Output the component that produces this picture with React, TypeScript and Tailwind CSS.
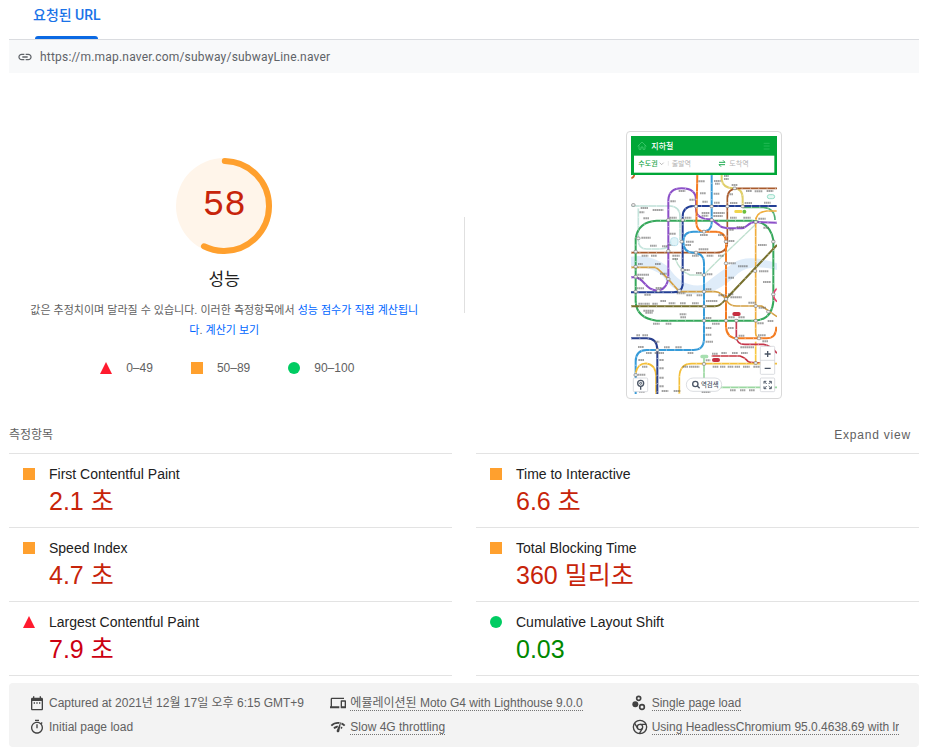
import type { ReactNode } from "react";

type Rating = "fail" | "average" | "pass";

const LATIN = "font-['Liberation_Sans','Noto_Sans_CJK_KR',sans-serif]";

function Marker({ rating }: { rating: Rating }) {
  return (
    <svg viewBox="0 0 12 12" className="size-3 shrink-0" aria-hidden="true">
      {rating === "fail" && <path d="M6 0 12 12H0Z" fill="#ff1a2e" />}
      {rating === "average" && <rect width="12" height="12" fill="#ffa02e" />}
      {rating === "pass" && <circle cx="6" cy="6" r="6" fill="#00cc62" />}
    </svg>
  );
}

function Gauge() {
  const radius = 45;
  const length = 2 * Math.PI * radius;
  return (
    <div className="grid size-24 place-items-center">
      <svg viewBox="0 0 96 96" className="col-start-1 row-start-1 size-24" aria-hidden="true">
        <circle cx="48" cy="48" r="48" fill="#fff5ea" />
        <circle
          cx="48"
          cy="48"
          r={radius}
          fill="none"
          stroke="#ffa02e"
          strokeWidth="6"
          strokeLinecap="round"
          strokeDasharray={`${0.57 * length} ${length}`}
          transform="rotate(-89 48 48)"
        />
      </svg>
      <span className="col-start-1 row-start-1 font-['Liberation_Mono',monospace] text-4xl text-[#c7240a]">58</span>
    </div>
  );
}

const LINES: { d: string; c: string; w?: number }[] = [
  { d: "M33 243H150Q180 245 180 275V345", c: "#bfe0d8", w: 5 },
  { d: "M55 250V345Q55 372 80 372H120Q148 372 150 350", c: "#c4e4dc", w: 5 },
  { d: "M405 290V300L290 410Q250 450 252 450H210Q180 440 165 400", c: "#bfe0cf", w: 4 },
  { d: "M407 715V650", c: "#f8c840" },
  { d: "M305 148V165Q310 190 340 190Q368 190 368 220V245", c: "#e0cf6a", w: 6 },
  { d: "M368 247H430Q465 250 465 285", c: "#4fae72", w: 5 },
  { d: "M471 258H440Q407 262 407 290V625Q407 640 425 640", c: "#f0ad3c", w: 5 },
  { d: "M33 383H290Q322 383 322 350V220Q322 190 355 190H471", c: "#a85a2c", w: 5 },
  { d: "M47 340Q55 290 110 287H395Q450 290 460 345V530Q455 587 400 587H110Q50 580 47 530Z", c: "#36a85b", w: 6 },
  { d: "M33 457H45C75 460 75 497 115 497Q145 490 145 450V225Q147 190 185 190Q228 190 228 225V255Q230 283 275 283L305 306Q315 310 340 310H365C380 310 385 291 405 291L471 293", c: "#8c50c8", w: 6 },
  { d: "M471 243H220Q188 245 188 275V480Q185 502 160 502H33", c: "#233f95", w: 6 },
  { d: "M275 148V295Q275 320 245 320H220Q190 320 190 350Q190 383 222 383Q252 385 252 415V645Q250 675 220 675H80Q47 675 47 710V807", c: "#369bd9", w: 6 },
  { d: "M232 148L229 295Q230 320 255 320H288Q318 322 318 352V605Q320 640 352 640H440Q469 640 469 605", c: "#f47b20", w: 6 },
  { d: "M33 427H105Q115 427 178 500H285Q305 500 322 530Q330 543 350 543H425L471 575", c: "#d4a043", w: 5 },
  { d: "M33 544H285Q300 544 315 525L471 360", c: "#77702d", w: 6 },
  { d: "M349 587V635Q350 658 375 658H430Q450 660 471 685", c: "#c6384d", w: 5 },
  { d: "M275 693H360Q375 697 385 710Q390 714 430 714", c: "#c6343f", w: 5 },
  { d: "M252 690V787H471", c: "#9bd8a1", w: 5 },
  { d: "M178 807V755Q180 716 215 716H471", c: "#f4bf39", w: 5 },
  { d: "M47 745Q52 715 78 715Q108 718 108 755V807", c: "#f4bf39", w: 5 },
  { d: "M33 640H80Q112 640 112 675V807", c: "#293f8d", w: 6 },
  { d: "M33 160Q43 158 43 148", c: "#d0622c", w: 5 },
  { d: "M471 490Q450 510 471 530", c: "#e74475", w: 5 },
];

const STATIONS = [
  [145, 285], [188, 285], [228, 244], [275, 244], [322, 244], [344, 190], [368, 244], [40, 240],
  [55, 340], [47, 380], [145, 378], [185, 350], [228, 383], [318, 350], [252, 320], [460, 350],
  [47, 425], [47, 455], [47, 500], [115, 497], [145, 462], [178, 497], [188, 435], [252, 500],
  [252, 544], [252, 587], [318, 415], [318, 522], [318, 587], [349, 587], [407, 587], [407, 543],
  [405, 438], [445, 560], [460, 508], [349, 640], [417, 640], [112, 675], [252, 717], [407, 714],
  [47, 750], [407, 291], [275, 285], [252, 450],
];

const LABELS = [
  [62, 249, 22], [98, 255, 32], [58, 262, 15], [235, 169, 20], [282, 168, 20], [285, 176, 14], [240, 205, 18],
  [281, 206, 18], [312, 153, 14], [312, 162, 14], [335, 180, 18], [378, 198, 18], [404, 199, 24], [440, 198, 20],
  [176, 198, 20], [151, 229, 16], [208, 224, 16], [247, 230, 16], [282, 233, 18], [330, 234, 22], [374, 234, 22],
  [432, 233, 20], [148, 278, 22], [194, 278, 20], [245, 264, 24], [245, 272, 20], [280, 264, 34], [280, 273, 28],
  [330, 278, 20], [370, 278, 22], [415, 281, 22], [328, 208, 12], [70, 280, 18], [64, 338, 28], [90, 362, 20],
  [126, 364, 18], [148, 326, 20], [148, 360, 18], [198, 350, 24], [196, 360, 18], [240, 330, 24], [236, 373, 30],
  [294, 330, 18], [326, 348, 18], [328, 314, 14], [350, 306, 24], [414, 360, 26], [430, 308, 18], [65, 392, 20],
  [93, 392, 18], [157, 392, 22], [157, 402, 18], [260, 392, 20], [294, 392, 18], [216, 392, 20], [325, 415, 22],
  [105, 417, 18], [54, 417, 14], [52, 449, 36], [54, 460, 18], [120, 446, 20], [193, 435, 16], [228, 444, 18],
  [260, 448, 18], [170, 505, 26], [73, 509, 20], [107, 489, 20], [50, 490, 22], [55, 536, 16], [73, 536, 16],
  [97, 536, 16], [121, 528, 18], [146, 535, 20], [180, 535, 18], [216, 535, 20], [258, 528, 34], [257, 493, 18],
  [199, 511, 18], [230, 511, 18], [295, 511, 22], [325, 458, 18], [324, 508, 16], [331, 517, 34], [354, 424, 30],
  [385, 533, 22], [417, 439, 28], [429, 471, 24], [416, 548, 22], [70, 557, 32], [76, 563, 22], [99, 596, 20],
  [137, 596, 18], [179, 568, 20], [181, 577, 18], [257, 579, 18], [276, 596, 24], [325, 577, 20], [355, 577, 20],
  [412, 595, 20], [443, 588, 18], [257, 609, 18], [257, 629, 18], [257, 650, 22], [324, 609, 18], [356, 632, 18],
  [414, 631, 24], [427, 649, 18], [361, 667, 42], [49, 631, 12], [67, 631, 18], [104, 650, 14], [54, 666, 18],
  [78, 684, 18], [104, 684, 28], [132, 667, 18], [166, 667, 20], [203, 684, 18], [55, 705, 18], [66, 725, 16],
  [118, 705, 14], [118, 730, 14], [118, 758, 14], [118, 784, 14], [53, 749, 24], [188, 725, 16], [207, 725, 16],
  [224, 725, 14], [257, 706, 14], [278, 725, 18], [300, 725, 16], [323, 725, 18], [344, 725, 16], [369, 725, 20],
  [400, 725, 20], [276, 686, 18], [304, 684, 16], [336, 684, 18], [363, 684, 20], [330, 796, 18], [360, 796, 16],
  [387, 796, 18], [125, 798, 20], [57, 800, 18], [161, 798, 20], [245, 801, 26],
];

function SubwayThumbnail() {
  const white = { fill: "#fff", fontWeight: 500 };
  return (
    <svg
      viewBox="33 33 438 774"
      className="h-[258px] w-[146px] font-['Noto_Sans_CJK_KR',sans-serif]"
      role="img"
      aria-label="지하철"
    >
      <rect x="33" y="33" width="438" height="774" fill="#fff" />
      <path
        d="M33 395Q90 385 145 425Q185 490 250 480Q300 440 340 415Q380 385 471 415V435Q390 415 355 445Q300 500 250 505Q170 520 130 455Q90 420 33 430Z"
        fill="#dfecf9"
      />
      {LINES.map((line) => (
        <path key={line.d} d={line.d} fill="none" stroke={line.c} strokeWidth={line.w ?? 5} />
      ))}
      {LINES.map((line) => (
        <path key={line.d} d={line.d} fill="none" stroke="#fff" strokeOpacity="0.45" strokeWidth="4" strokeDasharray="3 22" />
      ))}
      {LABELS.map(([x, y, w]) => (
        <path key={`${x}-${y}`} d={`M${x} ${y}h${w}`} stroke="#555" strokeOpacity="0.55" strokeWidth="6" strokeDasharray="5 1" />
      ))}
      {STATIONS.map(([x, y]) => (
        <rect key={`${x}-${y}`} x={x - 5} y={y - 4} width="10" height="8" rx="3" fill="#f4f4f4" stroke="#777" strokeWidth="2" />
      ))}
      <circle cx="373" cy="260" r="6" fill="#6cbf3c" />
      <rect x="343" y="255" width="24" height="9" rx="4" fill="#f1d54c" />
      <rect x="442" y="209" width="22" height="12" rx="6" fill="#e6f8f2" stroke="#66cdb0" strokeWidth="2" />
      <rect x="152" y="338" width="22" height="24" rx="8" fill="#dff3f8" stroke="#a9d9e8" strokeWidth="2" />
      <rect x="337" y="561" width="25" height="12" rx="6" fill="#c62f40" />
      <rect x="276" y="699" width="24" height="12" rx="6" fill="#c62f40" />
      <rect x="241" y="689" width="24" height="11" rx="5" fill="#a7dfb0" />

      <rect x="33" y="33" width="438" height="117" fill="#00a737" />
      <rect x="42" y="92" width="421" height="51" fill="#fff" />
      <path d="M53 64 66 51 79 64M57 61V73H63V66H69V73H75V61" fill="none" stroke="#4fd37b" strokeWidth="2" />
      <text x="94" y="71" fontSize="24" {...white}>지하철</text>
      <path d="M431 55H449M431 63H449M431 72H449" stroke="#30c263" strokeWidth="2" />
      <text x="55" y="122" fontSize="21" fontWeight="500" fill="#18a548">수도권</text>
      <path d="M119 113 125 119 131 113" fill="none" stroke="#999" strokeWidth="2" />
      <path d="M145 108V122" stroke="#ddd" strokeWidth="2" />
      <text x="155" y="122" fontSize="21" fill="#b4b4b4">출발역</text>
      <path d="M297 112H315L309 106M315 119H297L303 125" fill="none" stroke="#20ad52" strokeWidth="3" />
      <text x="328" y="122" fontSize="21" fill="#b4b4b4">도착역</text>

      <g fill="#fff" stroke="#c8ccd2" strokeWidth="2">
        <rect x="421" y="664" width="43" height="84" rx="3" />
        <path d="M421 706H464" />
        <rect x="421" y="759" width="43" height="41" rx="3" />
        <rect x="40" y="759" width="43" height="41" rx="3" />
        <rect x="199" y="759" width="106" height="40" rx="20" />
      </g>
      <g fill="none" stroke="#4a5565" strokeWidth="4">
        <path d="M434 687H452M443 678V696M434 730H452" />
        <path d="M432 776V769H439M447 769H454V776M454 784V791H447M439 791H432V784M433 770 440 777M453 770 446 777M453 790 446 783M433 790 440 783" strokeWidth="3" />
        <circle cx="226" cy="777" r="8" />
        <path d="M232 783 239 790" />
        <circle cx="62" cy="775" r="9" />
        <circle cx="62" cy="775" r="3" strokeWidth="3" />
        <path d="M62 784V794" />
      </g>
      <text x="243" y="787" fontSize="19" fontWeight="500" fill="#4a5565">역검색</text>
    </svg>
  );
}

const METRICS: { title: string; value: string; rating: Rating }[] = [
  { title: "First Contentful Paint", value: "2.1 초", rating: "average" },
  { title: "Time to Interactive", value: "6.6 초", rating: "average" },
  { title: "Speed Index", value: "4.7 초", rating: "average" },
  { title: "Total Blocking Time", value: "360 밀리초", rating: "average" },
  { title: "Largest Contentful Paint", value: "7.9 초", rating: "fail" },
  { title: "Cumulative Layout Shift", value: "0.03", rating: "pass" },
];

const VALUE_COLOR: Record<Rating, string> = {
  fail: "text-[#cc0011]",
  average: "text-[#c7240a]",
  pass: "text-[#008800]",
};

function Metric({ title, value, rating }: (typeof METRICS)[number]) {
  return (
    <div className="flex h-[74px] gap-[14px] border-t border-[#e3e3e3] pl-[14px]">
      <div className="pt-[14px]">
        <Marker rating={rating} />
      </div>
      <div className="pt-[10px]">
        <h3 className="text-sm leading-5 text-[#212121]">{title}</h3>
        <p className={`text-[25px] leading-[34px] ${VALUE_COLOR[rating]}`}>{value}</p>
      </div>
    </div>
  );
}

function MetaItem({ icon, children, hint }: { icon: ReactNode; children: ReactNode; hint?: boolean }) {
  return (
    <li className="flex h-6 min-w-0 items-center gap-1">
      <svg viewBox="0 0 24 24" className="size-4 shrink-0" fill="#424242" aria-hidden="true">
        {icon}
      </svg>
      <span
        className={
          hint
            ? "overflow-hidden leading-[14px] whitespace-nowrap border-b border-dotted border-[#757575]"
            : "leading-[14px] whitespace-nowrap"
        }
      >
        {children}
      </span>
    </li>
  );
}

export default function App() {
  return (
    <main className={`pr-3 pl-[9px] text-xs text-[#616161] ${LATIN}`}>
      <nav className="flex h-10 border-b border-[#dadce0] pl-6">
        <button className="flex flex-col items-center font-[Roboto,'Noto_Sans_CJK_KR',sans-serif] text-sm font-medium text-[#1a73e8]">
          <span className="h-9 pt-[5px] leading-5">요청된 URL</span>
          <span className="h-[3px] w-[63px] rounded-t-sm bg-[#0b69e3]" />
        </button>
      </nav>
      <div className="flex h-[33px] items-center gap-[7px] bg-[#f8f9fa] pl-2 text-[#5f6368]">
        <svg viewBox="0 0 24 24" className="size-4" fill="#5f6368" aria-hidden="true">
          <path d="M3.9 12c0-1.71 1.39-3.1 3.1-3.1h4V7H7c-2.76 0-5 2.24-5 5s2.24 5 5 5h4v-1.9H7c-1.71 0-3.1-1.39-3.1-3.1zM8 13h8v-2H8v2zm9-6h-4v1.9h4c1.71 0 3.1 1.39 3.1 3.1s-1.39 3.1-3.1 3.1h-4V17h4c2.76 0 5-2.24 5-5s-2.24-5-5-5z" />
        </svg>
        <span className="font-[Roboto,sans-serif] text-xs tracking-[0.2px]">https://m.map.naver.com/subway/subwayLine.naver</span>
      </div>

      <section className="flex items-start pt-[58px]">
        <div className="flex flex-1 flex-col items-center pt-[27px] pr-6">
          <Gauge />
          <h1 className="mt-[14px] text-[17px] leading-6 text-[#212121]">성능</h1>
          <p className="mt-2 w-[396px] text-center text-[11px] leading-5 break-all">
            값은 추정치이며 달라질 수 있습니다. 이러한 측정항목에서{" "}
            <a href="#score" className="text-[#0066ff]">성능 점수가 직접 계산됩니다</a>.{" "}
            <a href="#calculator" className="text-[#0066ff]">계산기 보기</a>
          </p>
          <ul className="mt-[18px] flex gap-[38px] pl-[6px] leading-5">
            <li className="flex items-center gap-[14px]"><Marker rating="fail" />0–49</li>
            <li className="flex items-center gap-[14px]"><Marker rating="average" />50–89</li>
            <li className="flex items-center gap-[14px]"><Marker rating="pass" />90–100</li>
          </ul>
        </div>
        <div className="mt-[86px] h-24 w-px bg-[#e0e0e0]" />
        <div className="flex flex-1 justify-center pl-6">
          <div className="rounded-sm border border-[#d9d9d9] p-1">
            <SubwayThumbnail />
          </div>
        </div>
      </section>

      <div className="mt-[26px] flex h-[28px] items-start justify-between leading-5">
        <h2>측정항목</h2>
        <button className="pr-2 tracking-[0.8px]">Expand view</button>
      </div>
      <section className="grid grid-cols-2 gap-x-6">
        {METRICS.map((metric) => (
          <Metric key={metric.title} {...metric} />
        ))}
        <div className="border-t border-[#e3e3e3]" />
        <div className="border-t border-[#e3e3e3]" />
      </section>

      <ul className="mt-[7px] grid grid-cols-[301fr_301fr_267fr] rounded bg-[#f3f3f3] py-2 pr-5 pl-5">
        <MetaItem icon={<path d="M19 4h-1V2h-2v2H8V2H6v2H5c-1.100 0-2 .900-2 2v15c0 1.100.900 2 2 2h14c1.100 0 2-.900 2-2V6c0-1.100-.900-2-2-2zm0 17H5V9h14v12zM7 11h2v2H7zm4 0h2v2h-2zm4 0h2v2h-2z" fillRule="evenodd" />}>
          Captured at 2021년 12월 17일 오후 6:15 GMT+9
        </MetaItem>
        <MetaItem hint icon={<path d="M3 6h18V4H3C1.900 4 1 4.900 1 6v11H0v3h14v-3H3V6zm20 2h-6c-.550 0-1 .450-1 1v10c0 .550.450 1 1 1h6c.550 0 1-.450 1-1V9c0-.550-.450-1-1-1zm-1 9h-4v-7h4v7z" />}>
          에뮬레이션된 Moto G4 with Lighthouse 9.0.0
        </MetaItem>
        <MetaItem
          hint
          icon={
            <>
              <circle cx="5" cy="14" r="4.500" />
              <circle cx="10" cy="5" r="3" fill="none" stroke="#424242" strokeWidth="2.500" />
              <circle cx="15" cy="18" r="3.500" fill="none" stroke="#424242" strokeWidth="2.500" />
            </>
          }
        >
          Single page load
        </MetaItem>
        <MetaItem icon={<path d="M15 1H9v2h6V1zm-4 13h2V8h-2v6zm8.030-6.610 1.420-1.420c-.430-.510-.900-.990-1.410-1.410l-1.420 1.420C16.070 4.740 14.120 4 12 4c-4.970 0-9 4.030-9 9s4.020 9 9 9 9-4.030 9-9c0-2.120-.740-4.070-1.970-5.610zM12 20c-3.870 0-7-3.130-7-7s3.130-7 7-7 7 3.130 7 7-3.130 7-7 7z" />}>
          Initial page load
        </MetaItem>
        <MetaItem hint icon={<path d="M15.900 5c-.170 0-.320.090-.410.230l-.070.150-5.180 11.650c-.160.290-.260.610-.260.960 0 1.110.900 2.010 2.010 2.010.960 0 1.770-.680 1.960-1.590l.010-.030L16.400 5.500c0-.280-.220-.500-.500-.500zM1 9l2 2c2.880-2.880 6.790-4.080 10.530-3.620l1.190-2.680C9.890 3.840 4.740 5.270 1 9zm20 2 2-2c-1.640-1.640-3.550-2.820-5.590-3.570l-.530 2.820c1.500.620 2.900 1.530 4.120 2.750zm-4 4 2-2c-.800-.800-1.700-1.420-2.660-1.890l-.550 2.920c.420.270.830.590 1.210.970zM5 13l2 2c1.130-1.130 2.560-1.790 4.030-2l1.280-2.880c-2.630-.080-5.300.870-7.310 2.880z" />}>
          Slow 4G throttling
        </MetaItem>
        <MetaItem
          hint
          icon={
            <g fill="none" stroke="#424242" strokeWidth="2">
              <circle cx="12" cy="12" r="10" />
              <circle cx="12" cy="12" r="4" />
              <path d="M12 8H21M8.500 14 4 6.500M15.500 14 11 22" />
            </g>
          }
        >
          Using HeadlessChromium 95.0.4638.69 with lr
        </MetaItem>
      </ul>
    </main>
  );
}
